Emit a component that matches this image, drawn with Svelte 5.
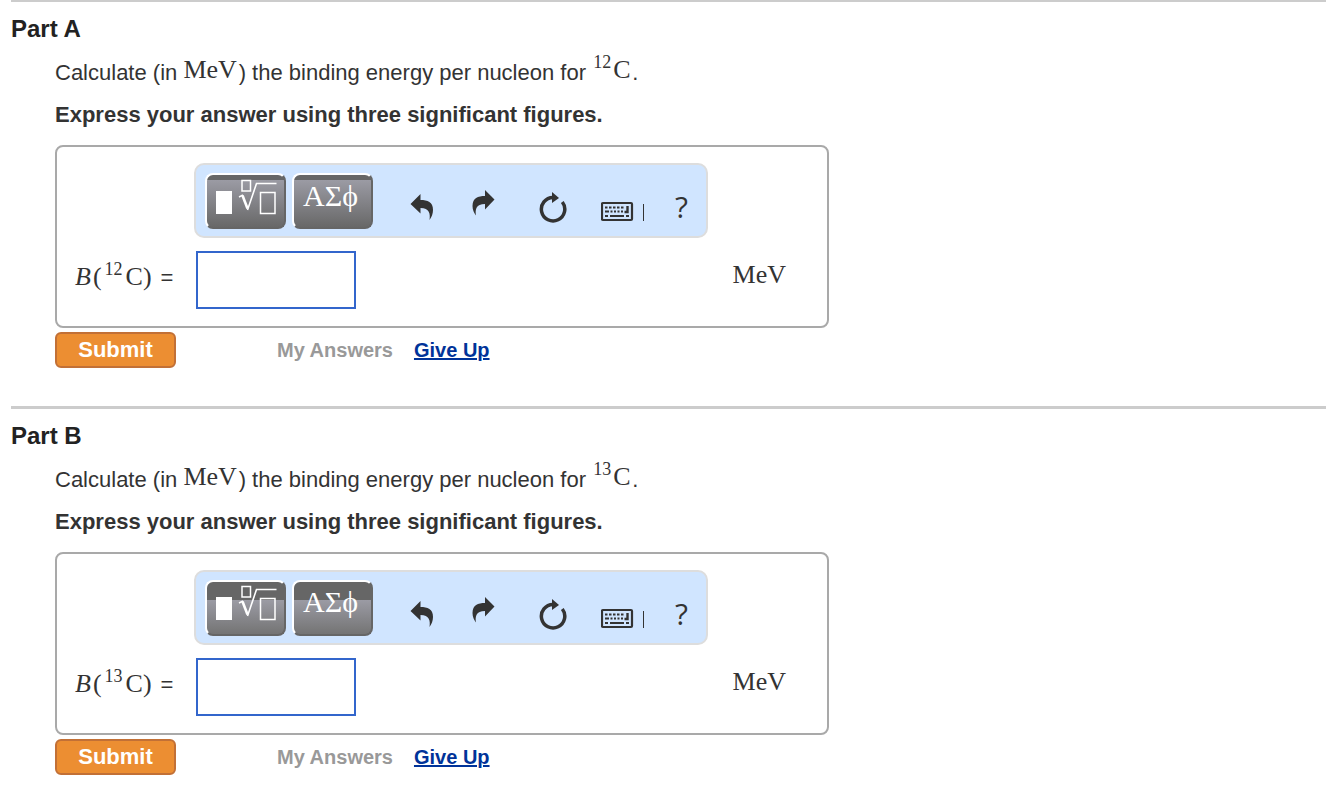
<script>
  const parts = [
    { name: 'A', mass: 12 },
    { name: 'B', mass: 13, shaded: true },
  ]

  let answers = $state({ A: '', B: '' })
</script>

<main>
  {#each parts as part}
    <section class="part" class:shaded={part.shaded}>
      <h2>Part {part.name}</h2>
      <div class="content">
        <p class="question">
          Calculate (in <span class="math">MeV</span>&hairsp;) the binding energy per nucleon for
          <span class="math"><sup>{part.mass}</sup>C</span>&hairsp;.
        </p>
        <p class="hint">Express your answer using three significant figures.</p>

        <form id={`form-${part.name}`} class="answer" onsubmit={(e) => e.preventDefault()}>
          <div class="toolbar">
            <button type="button" class="template" aria-label="Templates">
              <svg width="64" height="36" viewBox="0 0 64 36" fill="none" stroke="#fff">
                <path d="M2 12h16v23h-16z" fill="#fff" stroke="none" />
                <path d="M28 1.500h8.500v10.500h-8.500z" stroke-width="1.500" />
                <path d="M25 18l4-2" stroke-width="1.500" />
                <path d="M28.500 16.500l5 13" stroke-width="2.600" />
                <path d="M33.500 31l9-26.500h20" stroke-width="1.600" />
                <path d="M46.500 13.500h14.500v21h-14.500z" stroke-width="1.500" />
              </svg>
            </button>
            <button type="button" class="template symbols">ΑΣϕ</button>
            <button type="button" class="tool undo" aria-label="Undo">
              <svg width="24" height="28" viewBox="0 0 24 28" fill="#333">
                <path d="M0.500 10L10.500 0v6c7 0 12.500 2 12.500 10 0 4-1.500 7-3.500 10 1-6 0-12-9-12v5.500z" />
              </svg>
            </button>
            <button type="button" class="tool redo" aria-label="Redo">
              <svg width="24" height="28" viewBox="0 0 24 28" fill="#333">
                <path d="M22.500 9.500L13 0v6c-7 0-12.500 2-12.500 10 0 4 1.500 7 3.500 9.500-1-6 0-11.500 9-11.500v5.500z" />
              </svg>
            </button>
            <button type="button" class="tool reset" aria-label="Reset">
              <svg width="28" height="32" viewBox="0 0 28 32">
                <path d="M14 5.500A11.700 11.700 0 1 0 23.300 10" fill="none" stroke="#333" stroke-width="3.500" />
                <path d="M13 0l7 6-7 5z" fill="#333" />
              </svg>
            </button>
            <button type="button" class="tool keyboard" aria-label="Keyboard shortcuts">
              <svg width="44" height="22" viewBox="0 0 44 22" fill="none" stroke="#333">
                <rect x="1" y="2" width="30" height="17" rx="1" stroke-width="2.200" />
                <path d="M4 6.500h20" stroke-width="2.200" stroke-dasharray="2.500 1.500" />
                <path d="M4 10.500h18" stroke-width="2.200" stroke-dasharray="4 1.500 2 1.500 2 1.500 2 1.500 2 1.500" />
                <path d="M26.500 5v6h-3" stroke-width="2.400" />
                <path d="M4 15h3M9 15h14M25 15h3" stroke-width="2.200" />
                <path d="M42.500 3v17" />
              </svg>
            </button>
            <button type="button" class="tool help">?</button>
          </div>

          <label class="math" for={`answer-${part.name}`}>
            <span><i>B</i>(<sup>{part.mass}</sup>C)</span>
            <span class="equals">=</span>
          </label>
          <input id={`answer-${part.name}`} type="text" bind:value={answers[part.name]} />
          <span class="math unit">MeV</span>
        </form>

        <div class="actions">
          <button type="submit" class="submit" form={`form-${part.name}`}>Submit</button>
          <span class="my-answers">My Answers</span>
          <a href="#give-up">Give Up</a>
        </div>
      </div>
    </section>
  {/each}
</main>

<style>
  :global(body) {
    margin: 0;
    background: #fff;
    color: #333;
    font-family: "Liberation Sans", Arial, sans-serif;
    font-size: 22px;
  }

  main {
    margin-top: -1px;
    padding-left: 11px;
  }

  .part {
    border-top: 3px solid #ccc;
    padding-bottom: 38px;
  }

  .part:last-child {
    padding-bottom: 20px;
  }

  h2 {
    margin: 0;
    padding-top: 12px;
    color: #222;
    font-size: 24px;
    line-height: 30px;
  }

  .content {
    padding: 11px 16px 0 44px;
  }

  p {
    margin: 0;
    line-height: 36px;
  }

  .hint {
    margin: 6px 0 12px;
    font-weight: bold;
  }

  .math {
    font-family: "Liberation Serif", "Times New Roman", serif;
    font-size: 26px;
    line-height: 1;
  }

  .question .math {
    position: relative;
    top: -2px;
  }

  sup {
    margin: 0 2px 0 1px;
    font-size: 18px;
    line-height: 0;
    vertical-align: 10px;
  }

  .answer {
    box-sizing: border-box;
    max-width: 774px;
    display: grid;
    grid-template-columns: 121px 160px 1fr;
    row-gap: 13px;
    padding: 16px 41px 17px 18px;
    border: 2px solid #a9a9a9;
    border-radius: 8px;
  }

  .toolbar {
    grid-column: 2 / 4;
    justify-self: start;
    box-sizing: border-box;
    height: 75px;
    display: flex;
    align-items: flex-start;
    margin-left: -2px;
    padding: 8px 18px 0 9px;
    border: 2px solid #ddd;
    border-radius: 10px;
    background: #d0e5ff;
  }

  button {
    padding: 0;
    border: none;
    background: none;
    color: #333;
    cursor: pointer;
  }

  svg {
    display: block;
  }

  .template {
    box-sizing: border-box;
    width: 81px;
    height: 56px;
    display: flex;
    justify-content: center;
    align-items: flex-start;
    margin-right: 6px;
    padding-top: 4px;
    border: 2px solid #666;
    border-top-color: #fff;
    border-left-color: #fff;
    border-radius: 8px;
    background: linear-gradient(#666 5px, #9b9ba4 5px, #686868);
    color: #fff;
  }

  .shaded .template {
    padding-top: 3px;
    background: linear-gradient(#666 18px, #9b9ba4 18px, #747474);
  }

  .symbols {
    margin-right: 5px;
    padding-right: 4px;
    font-family: "Liberation Serif", serif;
    font-size: 30px;
    line-height: 34px;
  }

  .undo {
    margin: 21px 0 0 32px;
  }

  .redo {
    margin: 17px 0 0 38px;
  }

  .reset {
    margin: 19px 0 0 43px;
  }

  .keyboard {
    margin: 28px 0 0 34px;
  }

  .help {
    margin: 16px 0 0 30px;
    font-family: "Open Sans", sans-serif;
    font-size: 30px;
    line-height: 36px;
  }

  label {
    align-self: center;
    display: flex;
    align-items: baseline;
    gap: 9px;
    padding-bottom: 6px;
    white-space: nowrap;
  }

  label i {
    margin-right: 2px;
  }

  label sup {
    margin: 0 3px;
  }

  .equals {
    font-family: "Liberation Sans", Arial, sans-serif;
    font-size: 22px;
  }

  input {
    box-sizing: border-box;
    width: 160px;
    height: 58px;
    padding: 4px 8px;
    border: 2px solid #36c;
    background: #fff;
    font: inherit;
    outline: none;
  }

  .unit {
    align-self: center;
    justify-self: end;
    padding-bottom: 10px;
  }

  .actions {
    display: flex;
    align-items: center;
    margin-top: 4px;
    font-size: 20px;
    font-weight: bold;
  }

  .submit {
    box-sizing: border-box;
    width: 121px;
    height: 36px;
    border: 2px solid #c27036;
    border-radius: 6px;
    background: #ec8e32;
    color: #fff;
    font: bold 22px "Liberation Sans", Arial, sans-serif;
  }

  .my-answers {
    margin: 0 21px 0 101px;
    color: #999;
  }

  a {
    color: #039;
  }
</style>
